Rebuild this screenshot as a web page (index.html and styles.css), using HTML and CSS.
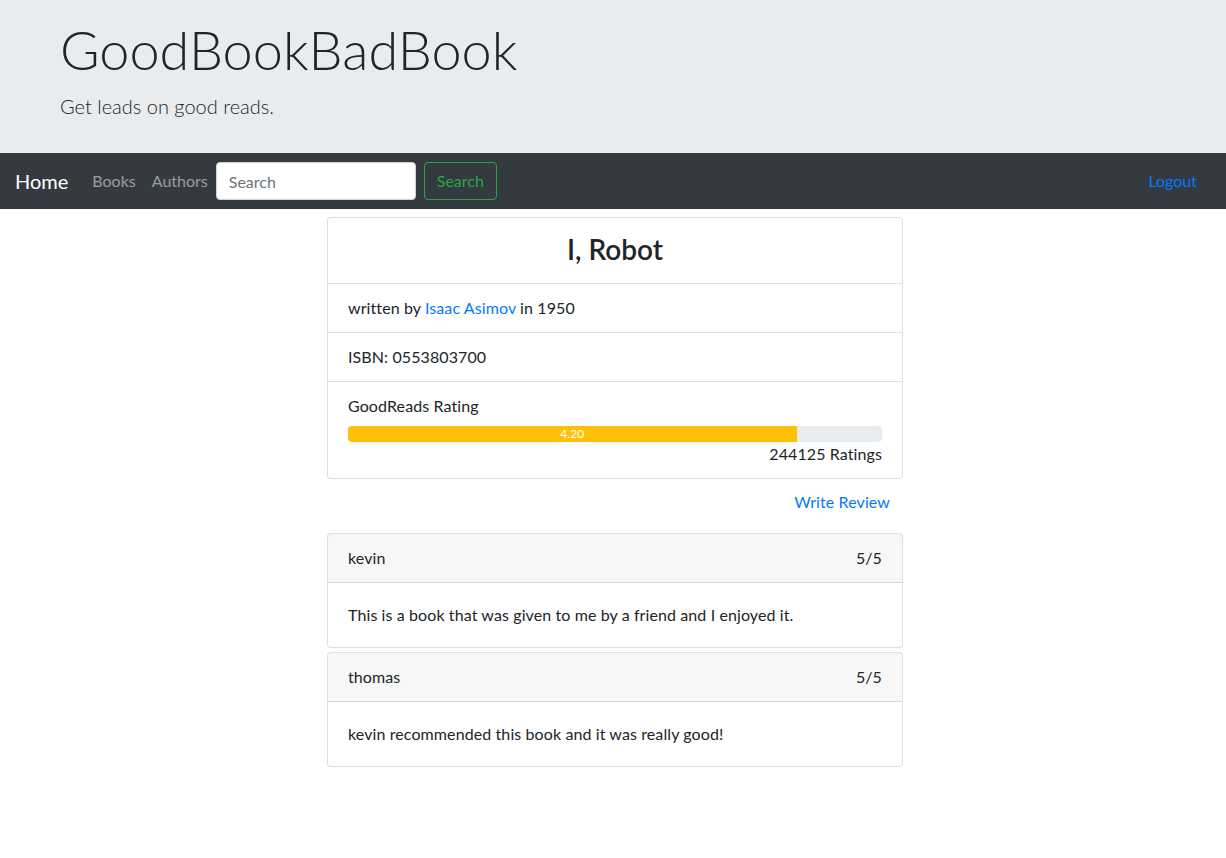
FILE: index.html
```html
<!DOCTYPE html>
<html lang="en">
<head>
<meta charset="utf-8">
<title>GoodBookBadBook</title>
<link rel="stylesheet" href="styles.css">
</head>
<body>
<header class="jumbotron">
  <h1 class="display">GoodBookBadBook</h1>
  <p class="lead">Get leads on good reads.</p>
</header>
<nav class="navbar">
  <a class="brand" href="#">Home</a>
  <a class="nav-link" href="#">Books</a>
  <a class="nav-link" href="#">Authors</a>
  <form class="search-form">
    <input class="search-input" type="text" placeholder="Search">
    <button class="btn-outline" type="button">Search</button>
  </form>
  <a class="logout" href="#">Logout</a>
</nav>
<main class="main">
  <div class="column">
    <section class="card">
      <div class="card-title-row"><h3 class="book-title">I, Robot</h3></div>
      <ul class="list-group">
        <li class="list-item">written by <a href="#" class="link">Isaac Asimov</a> in 1950</li>
        <li class="list-item">ISBN: 0553803700</li>
        <li class="list-item">
          <div>GoodReads Rating</div>
          <div class="progress"><div class="progress-bar" style="width: 84%">4.20</div></div>
          <div class="ratings">244125 Ratings</div>
        </li>
      </ul>
    </section>
    <div class="review-action"><a href="#" class="btn-link">Write Review</a></div>
    <div class="reviews">
      <article class="card review">
        <div class="card-header"><span>kevin</span><span>5/5</span></div>
        <div class="card-body">This is a book that was given to me by a friend and I enjoyed it.</div>
      </article>
      <article class="card review">
        <div class="card-header"><span>thomas</span><span>5/5</span></div>
        <div class="card-body">kevin recommended this book and it was really good!</div>
      </article>
    </div>
  </div>
</main>
</body>
</html>
```
FILE: styles.css
```css
* { box-sizing: border-box; }
body {
  margin: 0;
  font-family: "Segoe UI", Lato, "Open Sans", sans-serif;
  font-size: 16px;
  line-height: 24px;
  color: #212529;
  background: #fff;
}
a { text-decoration: none; }
.jumbotron {
  background: #e9ecef;
  padding: 16px 60px 32px;
}
.display {
  margin: 0 0 8px;
  font-size: 54px;
  font-weight: 300;
  line-height: 67px;
}
.lead {
  margin: 0;
  font-size: 20px;
  font-weight: 300;
  line-height: 30px;
}
.navbar {
  background: #343a40;
  height: 56px;
  padding: 8px 16px 8px 15px;
  display: flex;
  align-items: center;
}
.brand {
  color: #fff;
  font-size: 20px;
  line-height: 30px;
  margin-right: 16px;
  padding: 5px 0;
}
.nav-link {
  color: rgba(255,255,255,.5);
  padding: 8px 8px;
}
.search-form {
  display: flex;
  align-items: center;
}
.search-input {
  width: 200px;
  height: 38px;
  padding: 6px 12px;
  border: 1px solid #ced4da;
  border-radius: 4px;
  font: inherit;
  color: #495057;
  margin-right: 8px;
}
.search-input::placeholder { color: #6c757d; }
.btn-outline {
  height: 38px;
  padding: 6px 12px;
  background: transparent;
  border: 1px solid #28a745;
  color: #28a745;
  border-radius: 4px;
  font: inherit;
}
.logout {
  margin-left: auto;
  color: #007bff;
  padding: 8px 13px 8px 8px;
}
.main {
  display: flex;
  justify-content: center;
  padding: 8px 0 0 4px;
  letter-spacing: 0.1px;
}
.column { width: 576px; }
.card {
  border: 1px solid rgba(0,0,0,.125);
  border-radius: 4px;
  background: #fff;
}
.card-title-row {
  padding: 7px 20px 10px;
  text-align: center;
  border-bottom: 1px solid rgba(0,0,0,.125);
}
.book-title {
  margin: 0;
  font-size: 28px;
  font-weight: 600;
  line-height: 48px;
  letter-spacing: 0;
}
.list-group { list-style: none; margin: 0; padding: 0; }
.list-item {
  padding: 12px 20px;
  border-bottom: 1px solid rgba(0,0,0,.125);
}
.list-item:last-child { border-bottom: 0; }
.link { color: #007bff; }
.progress {
  margin-top: 8px;
  height: 16px;
  background: #e9ecef;
  border-radius: 4px;
  overflow: hidden;
  display: flex;
}
.progress-bar {
  background: #ffc107;
  color: #fff;
  font-size: 12px;
  line-height: 16px;
  text-align: center;
}
.ratings { text-align: right; }
.review-action {
  display: flex;
  justify-content: flex-end;
  margin-top: 4px;
}
.btn-link {
  color: #007bff;
  padding: 6px 12px;
  line-height: 24px;
  border: 1px solid transparent;
}
.reviews { margin-top: 12px; }
.review { margin-bottom: 4px; }
.card-header {
  display: flex;
  justify-content: space-between;
  padding: 12px 20px;
  background: rgba(0,0,0,.03);
  border-bottom: 1px solid rgba(0,0,0,.125);
}
.card-body { padding: 20px; }
```
